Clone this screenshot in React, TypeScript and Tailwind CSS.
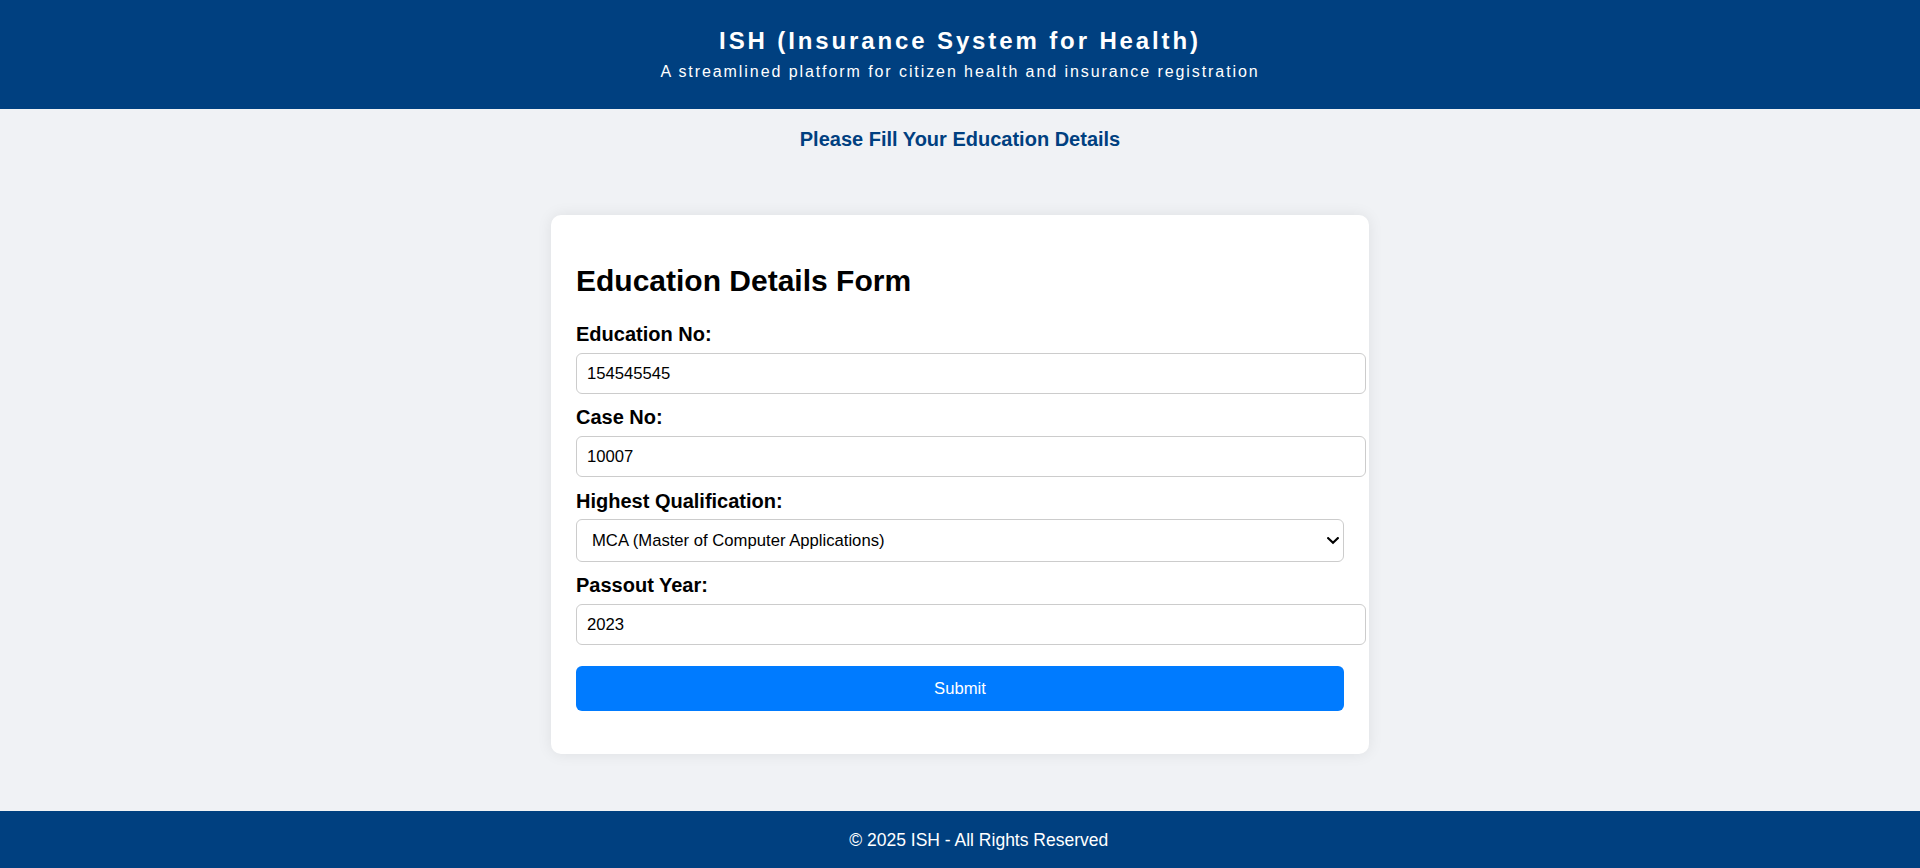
import React from "react";

export default function App() {
  return (
    <div
      className="min-h-screen flex flex-col bg-[#f0f2f5]"
      style={{ fontFamily: '"Liberation Sans", Arial, sans-serif' }}
    >
      <header className="bg-[#004080] text-white text-center pt-[27px] pb-[28px]">
        <h1 className="text-[24px] leading-[28px] font-bold tracking-[0.12em]">
          ISH (Insurance System for Health)
        </h1>
        <p className="mt-[8px] text-[16px] leading-[18px] tracking-[0.12em]">
          A streamlined platform for citizen health and insurance registration
        </p>
      </header>

      <main className="flex-1 flex flex-col items-center">
        <h3 className="mt-[19px] text-[20px] leading-[23px] font-bold text-[#004080]">
          Please Fill Your Education Details
        </h3>

        <div className="mt-[64px] w-[818px] bg-white rounded-[10px] shadow-[0_0_15px_rgba(0,0,0,0.08)] px-[25px] pt-[25px] pb-[43px]">
          <h2 className="mt-[24px] mb-[25px] text-[30px] leading-[34px] font-bold text-black">
            Education Details Form
          </h2>
          <form onSubmit={(e) => e.preventDefault()} className="flex flex-col">
            <label className="block text-[20px] leading-[23px] font-bold text-black mb-[6.5px]">
              Education No:
            </label>
            <input
              type="text"
              defaultValue="154545545"
              className="box-content w-full h-[19.4px] px-[10px] py-[10px] border border-[#cccccc] rounded-[6px] text-[16.67px] text-black mb-[12.5px] outline-none"
            />
            <label className="block text-[20px] leading-[23px] font-bold text-black mb-[6.5px]">
              Case No:
            </label>
            <input
              type="text"
              defaultValue="10007"
              className="box-content w-full h-[19.4px] px-[10px] py-[10px] border border-[#cccccc] rounded-[6px] text-[16.67px] text-black mb-[12.5px] outline-none"
            />
            <label className="block text-[20px] leading-[23px] font-bold text-black mb-[6.5px]">
              Highest Qualification:
            </label>
            <div className="relative w-full mb-[12.5px]">
              <select
                defaultValue="MCA"
                className="appearance-none w-full h-[42.4px] pl-[15px] pr-[30px] border border-[#cccccc] rounded-[6px] text-[16.67px] text-black bg-white outline-none"
              >
                <option value="BCA">BCA (Bachelor of Computer Applications)</option>
                <option value="MCA">MCA (Master of Computer Applications)</option>
                <option value="BTech">B.Tech (Bachelor of Technology)</option>
              </select>
              <svg
                className="pointer-events-none absolute right-[5px] top-[17.5px]"
                width="12"
                height="8"
                viewBox="0 0 12 8"
                fill="none"
              >
                <path
                  d="M1.2 1.2 L6 5.8 L10.8 1.2"
                  stroke="#000"
                  strokeWidth="2.2"
                  strokeLinecap="square"
                />
              </svg>
            </div>
            <label className="block text-[20px] leading-[23px] font-bold text-black mb-[6.5px]">
              Passout Year:
            </label>
            <input
              type="text"
              defaultValue="2023"
              className="box-content w-full h-[19.4px] px-[10px] py-[10px] border border-[#cccccc] rounded-[6px] text-[16.67px] text-black outline-none"
            />
            <button
              type="submit"
              className="mt-[20.5px] w-full h-[45px] bg-[#007bff] text-white text-[16.67px] rounded-[6px]"
            >
              Submit
            </button>
          </form>
        </div>
      </main>

      <footer className="bg-[#004080] text-white h-[57px] flex items-center justify-center pl-[37.5px] text-[17.5px] leading-[20px]">
        © 2025 ISH - All Rights Reserved
      </footer>
    </div>
  );
}
